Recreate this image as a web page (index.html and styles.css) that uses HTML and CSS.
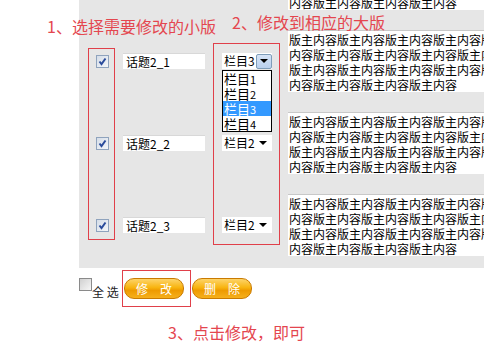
FILE: index.html
```html
<!DOCTYPE html>
<html lang="zh-CN">
<head>
    <meta charset="UTF-8">
    <title>版块修改</title>
    <link rel="stylesheet" href="styles.css">
</head>
<body>
    <div class="page">
        <div class="panel">
            <div class="list">
                <div class="row prev">
                    <span class="check"></span>
                    <span class="title"></span>
                    <span class="select"></span>
                    <div class="content">版主内容版主内容版主内容版主内容版主内容版主内容版主内容版主内容版主内容版主内容版主内容版主内容版主内容版主内容版主内容版主内容版主内容</div>
                </div>
                <div class="row">
                    <span class="check on"><svg width="9" height="9" viewBox="0 0 9 9"><path d="M1.5 4.5 L3.5 7 L7.5 1.5" fill="none" stroke="#2a4b9b" stroke-width="2"/></svg></span>
                    <span class="title">话题2_1</span>
                    <span class="select open"><span class="val">栏目3</span><span class="btn-arrow"><span class="tri"></span></span></span>
                    <div class="content">版主内容版主内容版主内容版主内容版主内容版主内容版主内容版主内容版主内容版主内容版主内容版主内容版主内容版主内容版主内容版主内容版主内容</div>
                </div>
                <div class="row">
                    <span class="check on"><svg width="9" height="9" viewBox="0 0 9 9"><path d="M1.5 4.5 L3.5 7 L7.5 1.5" fill="none" stroke="#2a4b9b" stroke-width="2"/></svg></span>
                    <span class="title">话题2_2</span>
                    <span class="select"><span class="val">栏目2</span><span class="tri"></span></span>
                    <div class="content">版主内容版主内容版主内容版主内容版主内容版主内容版主内容版主内容版主内容版主内容版主内容版主内容版主内容版主内容版主内容版主内容版主内容</div>
                </div>
                <div class="row">
                    <span class="check on"><svg width="9" height="9" viewBox="0 0 9 9"><path d="M1.5 4.5 L3.5 7 L7.5 1.5" fill="none" stroke="#2a4b9b" stroke-width="2"/></svg></span>
                    <span class="title">话题2_3</span>
                    <span class="select"><span class="val">栏目2</span><span class="tri"></span></span>
                    <div class="content">版主内容版主内容版主内容版主内容版主内容版主内容版主内容版主内容版主内容版主内容版主内容版主内容版主内容版主内容版主内容版主内容版主内容</div>
                </div>
            </div>
        </div>

        <div class="actions">
            <span class="check all"></span>
            <span class="all-label">全 选</span>
            <button class="btn">修&emsp;改</button>
            <button class="btn">删&emsp;除</button>
        </div>

        <!-- dropdown list of the first select -->
        <ul class="dropdown">
            <li>栏目<small>1</small></li>
            <li>栏目<small>2</small></li>
            <li class="active">栏目<small>3</small></li>
            <li>栏目<small>4</small></li>
        </ul>

        <!-- annotations -->
        <div class="note note-1">1、选择需要修改的小版</div>
        <div class="note note-2">2、修改到相应的大版</div>
        <div class="note note-3">3、点击修改，即可</div>
        <div class="mark mark-1"></div>
        <div class="mark mark-2"></div>
        <div class="mark mark-3"></div>
    </div>
</body>
</html>
```

FILE: styles.css
```css
* {
    margin: 0;
    padding: 0;
    box-sizing: border-box;
}

body {
    font-family: "Noto Sans CJK SC", sans-serif;
    font-size: 12px;
    background-color: #fff;
    color: #000;
    overflow: hidden;
}

.page {
    position: relative;
    width: 484px;
    height: 343px;
}

/* Gray panel with the board rows */
.panel {
    margin-left: 79px;
    height: 268px;
    background-color: #e6e6e6;
    overflow: hidden;
}

.list {
    margin-top: -62px;
}

.row {
    display: flex;
    align-items: center;
    height: 82px;
    padding-left: 17px;
}

.row.prev .check,
.row.prev .title,
.row.prev .select {
    visibility: hidden;
}

.check {
    flex: none;
    display: flex;
    align-items: center;
    justify-content: center;
    width: 13px;
    height: 13px;
    border: 1px solid #8fa3bd;
    background: linear-gradient(135deg, #d5dde8, #f4f6f9);
    margin-right: 14px;
}

.title {
    flex: none;
    width: 82px;
    height: 16px;
    line-height: 16px;
    padding-left: 3px;
    background-color: #fff;
    border-top: 1px solid #d8d8d8;
    margin-right: 17px;
}

.select {
    flex: none;
    display: flex;
    align-items: center;
    width: 50px;
    height: 16px;
    background-color: #fff;
    margin-right: 16px;
}

.select .val {
    flex: 1;
    padding-left: 2px;
    line-height: 16px;
}

.tri {
    width: 0;
    height: 0;
    border-left: 4px solid transparent;
    border-right: 4px solid transparent;
    border-top: 4px solid #000;
    margin-right: 5px;
}

.btn-arrow {
    display: flex;
    align-items: center;
    justify-content: center;
    width: 16px;
    height: 15px;
    background: linear-gradient(#d6e4f6, #b9d0ee);
    border: 1px solid #7f9db9;
    border-radius: 2px;
}

.btn-arrow .tri {
    margin-right: 0;
}

.content {
    flex: none;
    width: 218px;
    height: 62px;
    padding: 1px 1px;
    line-height: 15px;
    background-color: #fff;
    border-top: 1px solid #c8c8c8;
    overflow: hidden;
}

/* Bottom bar */
.actions {
    display: flex;
    align-items: flex-start;
    padding: 10px 0 0 79px;
}

.check.all {
    border-color: #8a8a8a;
    background: linear-gradient(135deg, #d0d0d0, #f6f6f6);
    margin-right: 0;
}

.all-label {
    color: #222;
    line-height: 14px;
    margin-top: 7px;
    width: 32px;
    white-space: pre;
}

.btn {
    width: 60px;
    height: 21px;
    margin-right: 8px;
    border: 1px solid #c97a00;
    border-radius: 10px;
    background: linear-gradient(#fdd46a 0%, #f8b410 45%, #ee9a00 60%, #f6b01c 100%);
    color: #fff;
    font-family: inherit;
    font-size: 12px;
    line-height: 19px;
}

/* Dropdown of the opened select */
.dropdown {
    position: absolute;
    left: 222px;
    top: 70px;
    width: 50px;
    height: 62px;
    list-style: none;
    background-color: #fff;
    border: 1px solid #000;
}

.dropdown li {
    height: 15px;
    line-height: 15px;
    font-size: 13px;
    padding-left: 1px;
    overflow: hidden;
}

.dropdown li small {
    font-size: 11px;
}

.dropdown li.active {
    background-color: #3399ff;
    color: #fff;
}

/* Red annotations */
.note {
    position: absolute;
    color: #e4464f;
    font-size: 16px;
    line-height: 20px;
    white-space: nowrap;
}

.note-1 {
    left: 47px;
    top: 16px;
}

.note-2 {
    left: 232px;
    top: 12px;
}

.note-3 {
    left: 168px;
    top: 322px;
}

.mark {
    position: absolute;
    border: 1px solid #e0404a;
}

.mark-1 {
    left: 88px;
    top: 48px;
    width: 27px;
    height: 192px;
}

.mark-2 {
    left: 213px;
    top: 43px;
    width: 67px;
    height: 202px;
}

.mark-3 {
    left: 122px;
    top: 270px;
    width: 69px;
    height: 37px;
}
```
